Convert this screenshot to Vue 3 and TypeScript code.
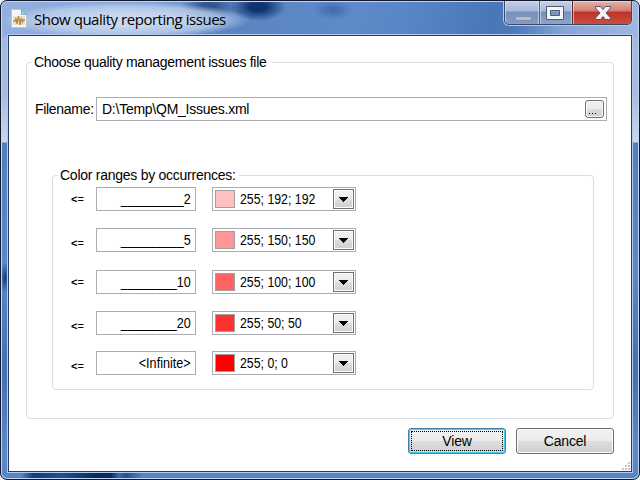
<script setup lang="ts">
interface ColorRange {
  limit: string
  blanks: string
  color: string
  label: string
}

const ranges: ColorRange[] = [
  { limit: '2', blanks: '_________', color: '#ffc0c0', label: '255; 192; 192' },
  { limit: '5', blanks: '_________', color: '#ff9696', label: '255; 150; 150' },
  { limit: '10', blanks: '________', color: '#ff6464', label: '255; 100; 100' },
  { limit: '20', blanks: '________', color: '#ff3232', label: '255; 50; 50' },
  { limit: '<Infinite>', blanks: '', color: '#ff0000', label: '255; 0; 0' },
]
</script>

<template>
  <div class="desktop">
    <div class="window">
      <header class="titlebar">
        <svg class="doc" width="16" height="19" viewBox="0 0 16 19">
          <path d="M.5 .5H10.5L15.5 5.5V18.5H.5Z" fill="#f4f7fa" stroke="#b4c6da" />
          <path d="M10.5 .5V5.5H15.5Z" fill="#a9c9e4" stroke="#6c9fc6" stroke-width=".8" />
          <rect x="2" y="7" width="12" height="9" fill="#eadfca" />
          <path d="M2 12H4L5 9L6 15L7.5 7L9 16L10.3 9L11.5 13L12.2 11H14" fill="none" stroke="#b98a3c" stroke-width="1.3" />
        </svg>
        <h1 class="title">Show quality reporting issues</h1>
        <div class="controls">
          <span class="ctl min">
            <svg width="35" height="22"><rect x="10.500" y="13.500" width="16" height="4" fill="#b0bdd2" stroke="#8291ac" /></svg>
          </span>
          <span class="ctl max">
            <svg width="32" height="22">
              <path d="M6.500 3.500H23.500V16.500H6.500ZM10.500 7.500V12.500H19.500V7.500Z" fill="#f3f5f8" fill-rule="evenodd" stroke="#535a6b" />
            </svg>
          </span>
          <span class="ctl close">
            <svg width="59" height="22">
              <path d="M22.500 3.500H27.500L30 6.500L32.500 3.500H37.500V5L33 10L37.500 15V16.500H32.500L30 13.500L27.500 16.500H22.500V15L27 10L22.500 5Z" fill="#f3f3f5" stroke="#555566" />
            </svg>
          </span>
        </div>
      </header>

      <main class="client">
        <section class="group outer">
          <div class="legend"><span class="t-legend">Choose quality management issues file</span></div>
          <div class="file-row">
            <label class="t-file">Filename:</label>
            <div class="file-field">
              <span class="t-path">D:\Temp\QM_Issues.xml</span>
              <button class="browse"><i></i><i></i><i></i></button>
            </div>
          </div>

          <section class="group inner">
            <div class="legend"><span class="t-ranges">Color ranges by occurrences:</span></div>
            <div class="rows">
              <div v-for="range in ranges" :key="range.limit" class="row">
                <span class="op"><b>&lt;</b>=</span>
                <div class="limit"><span class="value">{{ range.blanks }}{{ range.limit }}</span></div>
                <div class="combo">
                  <span class="swatch" :style="{ backgroundColor: range.color }"></span>
                  <span class="rgb">{{ range.label }}</span>
                  <span class="drop">
                    <svg width="9" height="5" shape-rendering="crispEdges"><path d="M0 0H9V1H8V2H7V3H6V4H5V5H4V4H3V3H2V2H1V1H0Z" /></svg>
                  </span>
                </div>
              </div>
            </div>
          </section>
        </section>

        <footer class="actions">
          <button class="btn primary"><span>View</span></button>
          <button class="btn">Cancel</button>
        </footer>
        <svg class="grip" width="9" height="9" shape-rendering="crispEdges" fill="#c4c8cd">
          <path d="M6 0h2v2h-2zM3 3h2v2h-2zM6 3h2v2h-2zM0 6h2v2h-2zM3 6h2v2h-2zM6 6h2v2h-2z" />
        </svg>
      </main>
    </div>
  </div>
</template>

<style>
body { margin: 0; overflow: hidden; }
</style>

<style scoped>
* { box-sizing: border-box; }
.desktop {
  width: 640px; height: 480px; background: #e8ebef;
  font: 14px/16px "Liberation Sans", Arial, sans-serif; color: #000;
}
.window {
  width: 640px; height: 480px; border: 1px solid #11182c; border-radius: 7px;
  padding: 0 7px 7px 6px; overflow: hidden;
  box-shadow: inset 0 0 0 1px #c5d6ef;
  background:
    radial-gradient(ellipse 5px 15px at 4px 277px, #173a7b, transparent),
    linear-gradient(90deg, transparent 20px, #123b77 32px, #234f91 60px, #082a64 95px, #082a64 110px, #3b68a9 118px, #234f91 125px, transparent 142px) 0 470px / 100% 10px no-repeat,
    radial-gradient(ellipse 125px 18px at 125px 19px, rgba(205, 219, 242, .95) 30%, rgba(190, 208, 235, .75) 75%, transparent),
    radial-gradient(ellipse 28px 14px at 257px 6px, #0f3474 30%, transparent),
    radial-gradient(ellipse 28px 14px at 208px 5px, #32558f 20%, transparent),
    radial-gradient(ellipse 20px 10px at 332px 9px, #4069aa, transparent),
    linear-gradient(105deg, #93b0df 0, #7fa2d9 150px, #5a84c2 225px, #5f8ac9 345px, #5785c6 400px, #4876b6 480px, #4e7abb 505px, #85a5d7 550px, #9cb6df 620px) 0 0 / 100% 36px no-repeat,
    linear-gradient(180deg, #9fb7df 0, #a8bce0 95px, #ccd7e9 141px, #537fc1 142px, #5b87cb 270px, #456fb3 370px, #5d88ca 450px, #5784c7 480px);
}
.titlebar { height: 34px; display: flex; align-items: flex-start; padding-left: 4px; }
.doc { margin-top: 8px; }
.title {
  margin: 8px 0 0 7px; font: 400 15px/20px "Open Sans", "Noto Sans", sans-serif;
  letter-spacing: -.46px; white-space: nowrap;
}
.controls {
  margin-left: auto; display: flex; height: 24px; width: 128px;
  border: 1px solid #3c4963; border-top: 0; border-radius: 0 0 5px 5px; overflow: hidden;
  box-shadow: 0 0 0 1px #b8c9e5;
}
.ctl { height: 24px; box-shadow: inset 0 0 0 1px rgba(220, 232, 248, .65); }
.ctl svg { display: block; margin-top: 2px; }
.min { width: 34px; background: linear-gradient(#c3d0e6 0, #a6b9d8 10px, #7590bc 11px, #829fcb 24px); }
.max { width: 33px; border-left: 1px solid #4d5c78; background: linear-gradient(#c7d2e7 0, #a6b9d8 10px, #7691bd 11px, #8ba7d1 24px); }
.close { flex: 1; border-left: 1px solid #66202a; background: linear-gradient(#e5b4ad 0, #d67c72 10px, #bd3327 11px, #cd5042 24px); }
.client {
  position: relative; width: 624px; height: 437px; margin-left: 1px;
  border: 1px solid #263c68; background: #fff;
  outline: 1px solid #b5cbed; display: flex; flex-direction: column;
  padding: 17px 17px 16px 17px;
}
.group { border: 1px solid #d5dfe5; border-radius: 4px; }
.legend { height: 16px; margin-top: -9px; display: flex; }
.legend span { background: #fff; white-space: nowrap; }
.outer { width: 588px; height: 357px; margin-top: 9px; flex: none; }
.outer > .legend { padding-left: 5px; }
.t-legend { padding: 0 0 0 2px; width: 240px; letter-spacing: -.3px; }
.file-row { display: flex; align-items: center; height: 24px; margin: 27px 6px 0 8px; }
.t-file { width: 61px; white-space: nowrap; letter-spacing: -.3px; }
.file-field {
  flex: 1; height: 24px; border: 1px solid #abadb3; display: flex; align-items: center;
  justify-content: space-between; padding: 0 2px 0 5px;
}
.t-path { letter-spacing: -.25px; }
.browse {
  width: 19px; height: 18px; border: 1px solid #707070; border-radius: 3px; padding: 0 0 3px 3px;
  background: linear-gradient(#f2f2f2, #ebebeb 50%, #dddddd 51%, #cfcfcf); box-shadow: inset 0 0 0 1px #fafafa;
  display: flex; align-items: flex-end; gap: 2px;
}
.browse i { width: 1px; height: 1px; background: #000; }
.inner { width: 542px; height: 215px; margin: 54px 0 0 25px; }
.inner > .legend { padding-left: 5px; }
.t-ranges { padding-left: 2px; width: 181px; letter-spacing: -.26px; }
.rows { display: grid; grid-template-rows: 41px 42px 41px 40px 24px; margin-top: 4px; padding-left: 18px; }
.row { display: flex; height: 24px; }
.op { width: 25px; font-size: 11px; line-height: 14px; padding-top: 5px; }
.row:nth-child(2) .op, .row:nth-child(4) .op, .row:nth-child(5) .op { padding-top: 8px; }
.limit {
  width: 100px; border: 1px solid #abadb3; display: flex; justify-content: flex-end;
  line-height: 22px; padding-right: 4px;
}
.value { transform: scaleX(.9); transform-origin: right; white-space: nowrap; }
.combo { width: 144px; margin-left: 16px; border: 1px solid #abadb3; display: flex; align-items: center; padding: 0 1px 0 2px; }
.swatch { width: 20px; height: 18px; border: 1px solid #a0a0a0; flex: none; }
.rgb { flex: 1; min-width: 0; margin-left: 5px; transform: scaleX(.88); transform-origin: left; white-space: nowrap; }
.drop {
  width: 21px; height: 20px; border: 1px solid #707070; display: flex; flex: none; align-items: center; justify-content: center;
  background: linear-gradient(#f2f2f2, #ebebeb 50%, #dddddd 51%, #cfcfcf); box-shadow: inset 0 0 0 1px #fcfcfc;
}
.actions { display: flex; justify-content: flex-end; gap: 10px; margin-top: 9px; }
.btn {
  width: 98px; height: 26px; border: 1px solid #707070; border-radius: 3px; padding: 0;
  font: 14px/16px "Liberation Sans", Arial, sans-serif; color: #000; letter-spacing: -.2px;
  background: linear-gradient(#f2f2f2, #ebebeb 50%, #dddddd 51%, #cfcfcf); box-shadow: inset 0 0 0 1px #fafafa;
}
.primary { border-color: #3c7fb1; box-shadow: inset 0 0 0 1px #45d0f5; padding: 2px; }
.primary span { display: block; height: 20px; line-height: 18px; border: 1px dotted #000; }
.grip { position: absolute; right: 0; bottom: 0; }
</style>
